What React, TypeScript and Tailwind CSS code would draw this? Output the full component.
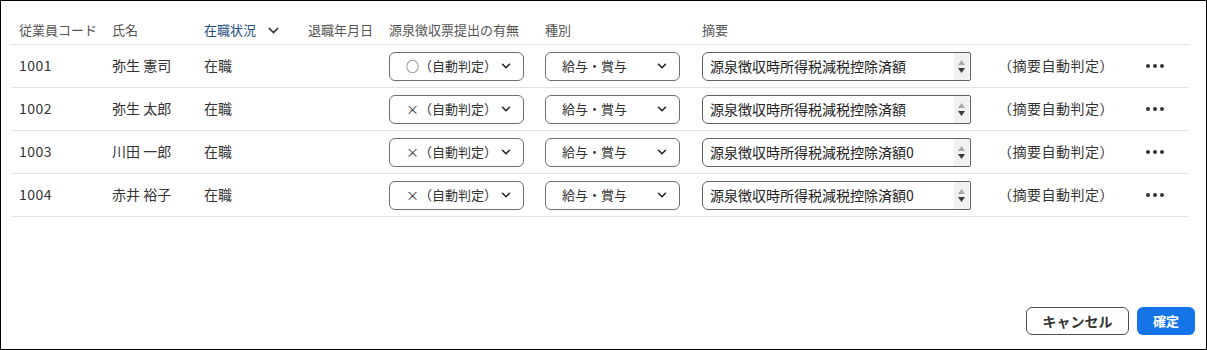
import { ChevronDown } from 'lucide-react'

interface Row {
  code: string
  name: string
  status: string
  withholding: string
  kind: string
  summary: string
}

const rows: Row[] = [
  { code: '1001', name: '弥生 憲司', status: '在職', withholding: '○（自動判定）', kind: '給与・賞与', summary: '源泉徴収時所得税減税控除済額' },
  { code: '1002', name: '弥生 太郎', status: '在職', withholding: '×（自動判定）', kind: '給与・賞与', summary: '源泉徴収時所得税減税控除済額' },
  { code: '1003', name: '川田 一郎', status: '在職', withholding: '×（自動判定）', kind: '給与・賞与', summary: '源泉徴収時所得税減税控除済額0' },
  { code: '1004', name: '赤井 裕子', status: '在職', withholding: '×（自動判定）', kind: '給与・賞与', summary: '源泉徴収時所得税減税控除済額0' },
]

const grid =
  'grid grid-cols-[93px_92px_104px_81px_156px_157px_296px_140px_57px] items-center'

function SelectBox({ value }: { value: string }) {
  return (
    <div className="flex items-center justify-between w-[135px] h-[29px] pl-[16px] pr-[10px] border border-[#6b7075] rounded-[6px] bg-white text-[13px] text-[#333]">
      <span>{value}</span>
      <ChevronDown className="w-[14px] h-[14px] text-[#222]" strokeWidth={2.6} />
    </div>
  )
}

function SummaryInput({ value }: { value: string }) {
  return (
    <div className="flex items-stretch w-[269px] h-[29px] border border-[#5f6368] rounded-l-[6px] rounded-r-[2px] bg-white overflow-hidden">
      <div className="flex-1 flex items-center pl-[7px] text-[14px] text-[#222] whitespace-nowrap">
        {value}
      </div>
      <div className="w-[15px] flex flex-col items-center justify-center gap-[3px] bg-[#f1f1f1] mr-[1px]">
        <svg width="7" height="5" viewBox="0 0 7 5">
          <path d="M3.5 0 L7 5 L0 5 Z" fill="#a9a9a9" />
        </svg>
        <svg width="7" height="5" viewBox="0 0 7 5">
          <path d="M0 0 L7 0 L3.5 5 Z" fill="#3a3a3a" />
        </svg>
      </div>
    </div>
  )
}

function Dots() {
  return (
    <div className="flex items-center gap-[3px]">
      <span className="w-[4px] h-[4px] rounded-full bg-[#333]" />
      <span className="w-[4px] h-[4px] rounded-full bg-[#333]" />
      <span className="w-[4px] h-[4px] rounded-full bg-[#333]" />
    </div>
  )
}

export default function App() {
  return (
    <div
      className="w-[1207px] h-[350px] border border-black bg-white flex flex-col"
      style={{ fontFamily: '"Noto Sans CJK JP", "Noto Sans", sans-serif' }}
    >
      <div className="ml-[10px] mr-[17px] mt-[15px]">
        {/* Header */}
        <div className={`${grid} h-[29px] border-b border-[#e2e2e2] text-[13px] text-[#555]`}>
          <div className="pl-[8px] whitespace-nowrap">従業員コード</div>
          <div className="pl-[8px]">氏名</div>
          <div className="pl-[8px] flex items-center gap-[9px] text-[#1d4f80]">
            在職状況
            <ChevronDown className="w-[17px] h-[17px] text-[#333]" strokeWidth={2} />
          </div>
          <div className="pl-[8px] whitespace-nowrap">退職年月日</div>
          <div className="pl-[8px] whitespace-nowrap">源泉徴収票提出の有無</div>
          <div className="pl-[8px]">種別</div>
          <div className="pl-[8px]">摘要</div>
          <div />
          <div />
        </div>

        {/* Rows */}
        {rows.map((row) => (
          <div key={row.code} className={`${grid} h-[43px] border-b border-[#e2e2e2] text-[14px] text-[#333]`}>
            <div className="pl-[8px] tracking-[0.5px] -mt-[2px]">{row.code}</div>
            <div className="pl-[8px] -mt-[2px]">{row.name}</div>
            <div className="pl-[8px] -mt-[2px]">{row.status}</div>
            <div />
            <div className="pl-[8px]">
              <SelectBox value={row.withholding} />
            </div>
            <div className="pl-[8px]">
              <SelectBox value={row.kind} />
            </div>
            <div className="pl-[8px]">
              <SummaryInput value={row.summary} />
            </div>
            <div className="pl-[8px] -mt-[2px] tracking-[0.5px] text-[#333] whitespace-nowrap">（摘要自動判定）</div>
            <div className="pl-[16px]">
              <Dots />
            </div>
          </div>
        ))}
      </div>

      {/* Footer */}
      <div className="mt-auto flex justify-end gap-[8px] pr-[11px] pb-[14px]">
        <button className="h-[28px] w-[103px] border border-[#4b5058] rounded-[6px] bg-white text-[14px] font-bold text-[#333]">
          キャンセル
        </button>
        <button className="h-[28px] w-[58px] rounded-[6px] bg-[#1473e6] text-[13px] font-bold text-white">
          確定
        </button>
      </div>
    </div>
  )
}
